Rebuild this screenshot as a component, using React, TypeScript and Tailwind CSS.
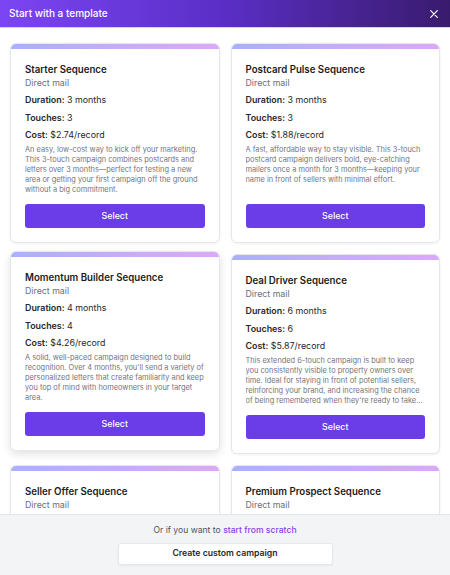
import React from 'react';

type Template = {
  name: string;
  duration: string;
  touches: number;
  cost: string;
  description: string;
  lifted?: boolean;
};

const templates: Template[] = [
  {
    name: 'Starter Sequence',
    duration: '3 months',
    touches: 3,
    cost: '$2.74/record',
    description:
      'An easy, low-cost way to kick off your marketing. This 3-touch campaign combines postcards and letters over 3 months\u2014perfect for testing a new area or getting your first campaign off the ground without a big commitment.',
  },
  {
    name: 'Postcard Pulse Sequence',
    duration: '3 months',
    touches: 3,
    cost: '$1.88/record',
    description:
      'A fast, affordable way to stay visible. This 3-touch postcard campaign delivers bold, eye-catching mailers once a month for 3 months\u2014keeping your name in front of sellers with minimal effort.',
  },
  {
    name: 'Momentum Builder Sequence',
    duration: '4 months',
    touches: 4,
    cost: '$4.26/record',
    description:
      "A solid, well-paced campaign designed to build recognition. Over 4 months, you'll send a variety of personalized letters that create familiarity and keep you top of mind with homeowners in your target area.",
    lifted: true,
  },
  {
    name: 'Deal Driver Sequence',
    duration: '6 months',
    touches: 6,
    cost: '$5.87/record',
    description:
      "This extended 6-touch campaign is built to keep you consistently visible to property owners over time. Ideal for staying in front of potential sellers, reinforcing your brand, and increasing the chance of being remembered when they're ready to take action.",
  },
  {
    name: 'Seller Offer Sequence',
    duration: '5 months',
    touches: 5,
    cost: '$4.92/record',
    description:
      'A direct, offer-focused campaign that puts a clear message in front of motivated sellers and invites them to reach out when the timing is right.',
  },
  {
    name: 'Premium Prospect Sequence',
    duration: '6 months',
    touches: 6,
    cost: '$6.45/record',
    description:
      'Our most complete campaign, pairing premium letters and postcards to build trust with high-value prospects over six months.',
  },
];

function TemplateCard({ t }: { t: Template }) {
  return (
    <div
      className={
        t.lifted
          ? 'flex flex-col rounded-md border border-gray-200 bg-white overflow-hidden shadow-[0_3px_8px_rgba(0,0,0,0.12)] -translate-y-[3px]'
          : 'flex flex-col rounded-md border border-gray-200 bg-white overflow-hidden shadow-[0_1px_3px_rgba(0,0,0,0.06)]'
      }
    >
      <div className="h-[5px] bg-gradient-to-r from-[#aab0fa] to-[#dca8f7]" />
      <div className="flex flex-1 flex-col px-[14px] pt-[14px] pb-[14px]">
        <div className="text-[9.7px] leading-[13px] font-semibold text-[#1c1c1e]">{t.name}</div>
        <div className="text-[8.8px] leading-[13px] text-[#6e6e76]">Direct mail</div>
        <div className="mt-[2px] text-[8.9px] leading-[17.5px] text-[#27272a]">
          <div>
            <span className="font-semibold">Duration:</span> {t.duration}
          </div>
          <div>
            <span className="font-semibold">Touches:</span> {t.touches}
          </div>
          <div>
            <span className="font-semibold">Cost:</span> {t.cost}
          </div>
        </div>
        <p className="mt-[1.5px] mb-[9px] text-[7.4px] leading-[10px] text-[#74747c] line-clamp-5">{t.description}</p>
        <button className="mt-auto h-6 w-full shrink-0 rounded-[3px] bg-[#6a3de8] text-[8.8px] font-medium text-white">
          Select
        </button>
      </div>
    </div>
  );
}

export default function App() {
  return (
    <div className="flex h-[575px] w-[450px] flex-col overflow-hidden bg-white" style={{ fontFamily: 'Inter, "Noto Sans", sans-serif' }}>
      {/* Header */}
      <div className="flex h-[28px] shrink-0 items-center justify-between border-b border-[#d9cff6] bg-gradient-to-r from-[#7c45f3] via-[#5a2ec6] to-[#391b6e] px-[9px]">
        <span className="text-[10px] font-medium text-white">Start with a template</span>
        <svg width="8" height="8" viewBox="0 0 8 8" className="mr-[3px]">
          <path d="M0.7 0.7L7.3 7.3M7.3 0.7L0.7 7.3" stroke="white" strokeWidth="1.2" strokeLinecap="round" />
        </svg>
      </div>

      {/* Templates */}
      <div className="flex-1 overflow-hidden px-[10px] pt-[15px]">
        <div className="grid grid-cols-2 gap-x-[11px] gap-y-[11px]">
          {templates.map((t) => (
            <TemplateCard key={t.name} t={t} />
          ))}
        </div>
      </div>

      {/* Footer */}
      <div className="flex shrink-0 flex-col items-center border-t border-gray-200 bg-[#f3f4f6] px-[10px] pt-[9px] pb-[10px]">
        <div className="text-[8.6px] leading-[13px] text-[#52525b]">
          Or if you want to <span className="font-medium text-[#8a3ee8]">start from scratch</span>
        </div>
        <button className="mt-[6px] h-[22px] w-1/2 rounded-[3px] border border-gray-200 bg-white text-[8.7px] font-semibold text-[#27272a] shadow-[0_1px_2px_rgba(0,0,0,0.05)]">
          Create custom campaign
        </button>
      </div>
    </div>
  );
}
